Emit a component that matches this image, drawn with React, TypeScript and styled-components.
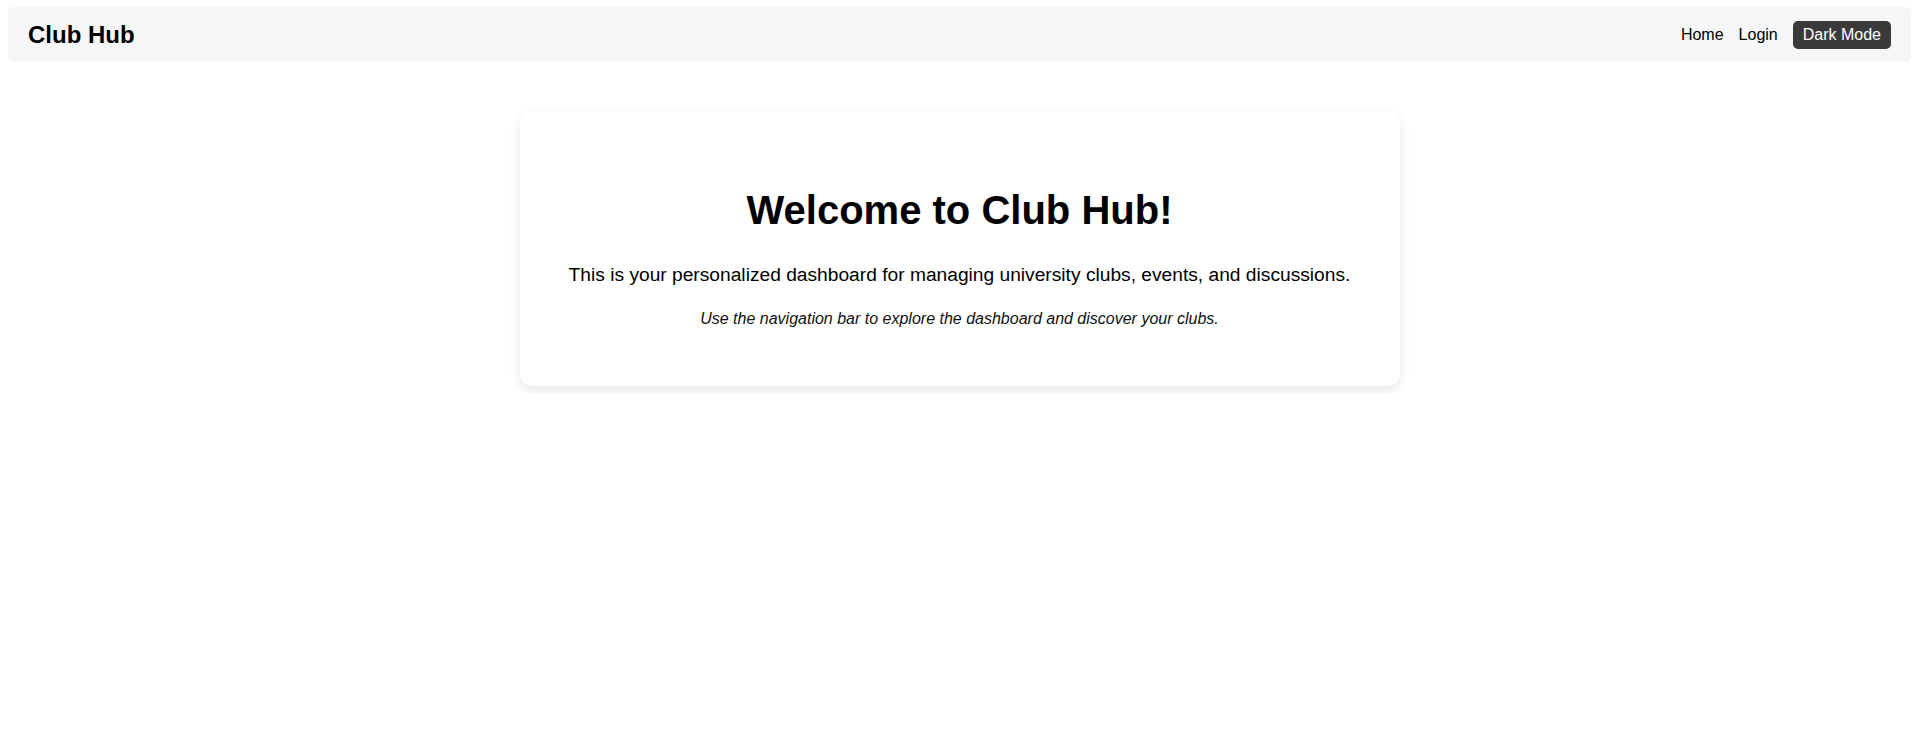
import React from "react";
import styled, { createGlobalStyle } from "styled-components";

const GlobalStyle = createGlobalStyle`
  body {
    margin: 0;
    padding: 7px 8px;
    background: #ffffff;
    font-family: "Liberation Sans", Arial, sans-serif;
    color: #000;
  }
`;

const NavBar = styled.nav`
  display: flex;
  align-items: center;
  justify-content: space-between;
  height: 55px;
  padding: 0 20px;
  box-sizing: border-box;
  background: #f5f6f8;
  border-radius: 5px;
`;

const Brand = styled.div`
  font-size: 24px;
  font-weight: 700;
`;

const NavLinks = styled.div`
  display: flex;
  align-items: center;
  gap: 15px;
`;

const NavLink = styled.a`
  font-size: 16px;
  color: #000;
  text-decoration: none;
  cursor: pointer;
`;

const ToggleButton = styled.button`
  font-family: "Liberation Sans", Arial, sans-serif;
  font-size: 16px;
  color: #fff;
  background: #3a3a3a;
  border: none;
  border-radius: 5px;
  padding: 5px 10px;
  height: 28px;
  line-height: 18px;
  cursor: pointer;
`;

const Main = styled.main`
  display: flex;
  justify-content: center;
  padding-top: 50px;
`;

const Card = styled.section`
  width: 880px;
  box-sizing: border-box;
  background: #fff;
  border-radius: 12px;
  box-shadow: 0 4px 12px rgba(0, 0, 0, 0.1);
  padding: 75px 40px 58px;
  display: flex;
  flex-direction: column;
  align-items: center;
  text-align: center;
`;

const Title = styled.h1`
  margin: 0 0 31px;
  font-size: 40px;
  font-weight: 700;
  line-height: 46px;
`;

const Lead = styled.p`
  margin: 0 0 24px;
  font-size: 19.2px;
  line-height: 22px;
`;

const Hint = styled.p`
  margin: 0;
  font-size: 16px;
  font-style: italic;
  line-height: 18px;
  color: #111;
`;

export default function App() {
  return (
    <>
      <GlobalStyle />
      <NavBar>
        <Brand>Club Hub</Brand>
        <NavLinks>
          <NavLink>Home</NavLink>
          <NavLink>Login</NavLink>
          <ToggleButton>Dark Mode</ToggleButton>
        </NavLinks>
      </NavBar>
      <Main>
        <Card>
          <Title>Welcome to Club Hub!</Title>
          <Lead>
            This is your personalized dashboard for managing university clubs,
            events, and discussions.
          </Lead>
          <Hint>Use the navigation bar to explore the dashboard and discover your clubs.</Hint>
        </Card>
      </Main>
    </>
  );
}
